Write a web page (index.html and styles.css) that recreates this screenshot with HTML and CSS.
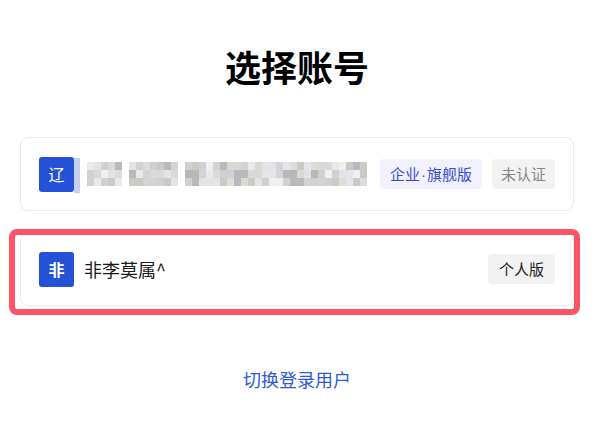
FILE: index.html
```html
<!DOCTYPE html>
<html lang="zh-CN">
<head>
<meta charset="utf-8">
<title>选择账号</title>
<link rel="stylesheet" href="styles.css">
</head>
<body>
<div class="page">
  <h1 class="title">选择账号</h1>
  <div class="list">
    <div class="card">
      <div class="avatar">辽</div>
      <div class="avatar-edge"></div>
      <div class="mosaic" id="mosaic"></div>
      <div class="tags">
        <span class="tag tag-blue">企业<span class="dot">·</span>旗舰版</span>
        <span class="tag tag-gray">未认证</span>
      </div>
    </div>
    <div class="card card-selected">
      <div class="avatar avatar-bold">非</div>
      <div class="name">非李莫属^</div>
      <div class="tags">
        <span class="tag tag-dark">个人版</span>
      </div>
      <div class="highlight"></div>
    </div>
  </div>
  <div class="switch"><a class="switch-link">切换登录用户</a></div>
</div>
<script src="script.js"></script>
</body>
</html>
```
FILE: styles.css
```css
html, body {
  margin: 0;
  padding: 0;
  background: #ffffff;
}
body {
  font-family: "Noto Sans CJK SC", "Noto Sans", sans-serif;
  color: #1a1a1a;
}
.page {
  width: 594px;
  box-sizing: border-box;
  padding: 0 20px;
}
.title {
  margin: 0;
  padding-top: 42px;
  font-size: 36px;
  line-height: 48px;
  font-weight: 700;
  color: #000;
  text-align: center;
}
.list {
  margin-top: 47px;
  display: flex;
  flex-direction: column;
  gap: 21px;
}
.card {
  position: relative;
  height: 74px;
  box-sizing: border-box;
  border: 1px solid #ebebeb;
  border-radius: 8px;
  padding: 0 18px;
  display: flex;
  align-items: center;
  background: #fff;
}
.avatar {
  width: 35px;
  height: 35px;
  border-radius: 3px;
  background: #2451d6;
  color: #fff;
  font-size: 16px;
  display: flex;
  align-items: center;
  justify-content: center;
  flex: none;
}
.avatar-bold {
  font-weight: 700;
}
.avatar-edge {
  width: 6px;
  height: 35px;
  background: #c6d1f2;
  margin-top: 2px;
  flex: none;
}
.mosaic {
  margin-left: 7px;
  display: flex;
  gap: 0;
  height: 24px;
}
.mseg {
  display: grid;
  grid-auto-flow: column;
  grid-template-rows: repeat(3, 8px);
  grid-auto-columns: 7px;
}
.mgap {
  width: 7px;
}
.name {
  margin-left: 10px;
  font-size: 18px;
  color: #1a1a1a;
}
.tags {
  margin-left: auto;
  display: flex;
  gap: 10px;
}
.tag {
  height: 30px;
  line-height: 30px;
  padding: 0 10px;
  border-radius: 4px;
  font-size: 15px;
}
.dot {
  font-family: "Liberation Sans", sans-serif;
  padding: 0 1px;
}
.tag-blue {
  background: #f1f2fe;
  color: #3a4bd3;
}
.tag-gray {
  background: #f2f2f2;
  color: #8a8580;
  padding: 0 9px;
}
.tag-dark {
  background: #f2f2f2;
  color: #222;
  padding: 0 11px;
}
.highlight {
  position: absolute;
  left: -12px;
  top: -4px;
  width: 571px;
  height: 86px;
  box-sizing: border-box;
  border: 6px solid #fd5368;
  border-radius: 8px;
  pointer-events: none;
}
.switch {
  margin-top: 60px;
  text-align: center;
}
.switch-link {
  font-size: 18px;
  color: #2f5ad6;
  cursor: pointer;
}
```
FILE: script.js
```js
(function () {
  var segs = [5, 7, 26];
  var palette = ["#dcdcdc", "#d2cfd2", "#c9cac4", "#e4e2e4", "#b9b8b4", "#d8dad6", "#e9e9ea", "#cfd3d0", "#bcb6be", "#e2e5ea", "#c8cbc6", "#f0efef", "#d6d1d6"];
  var seed = 7;
  function rnd() { seed = (seed * 9301 + 49297) % 233280; return seed / 233280; }
  var m = document.getElementById("mosaic");
  segs.forEach(function (n, i) {
    if (i > 0) { var g = document.createElement("div"); g.className = "mgap"; m.appendChild(g); }
    var s = document.createElement("div");
    s.className = "mseg";
    for (var k = 0; k < n * 3; k++) {
      var c = document.createElement("div");
      c.style.background = palette[Math.floor(rnd() * palette.length)];
      s.appendChild(c);
    }
    m.appendChild(s);
  });
})();
```
